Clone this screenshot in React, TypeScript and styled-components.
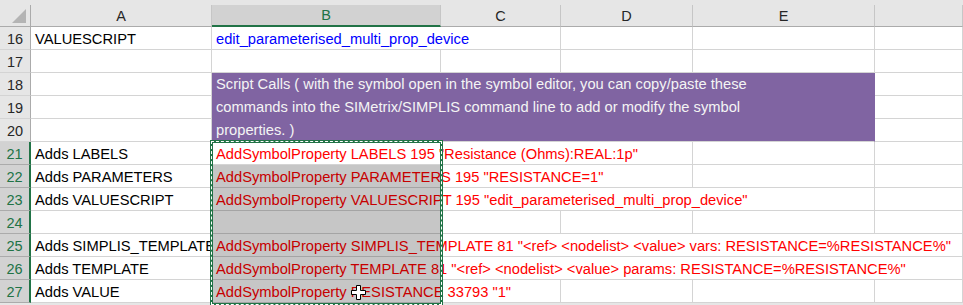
import React from 'react';
import styled, { createGlobalStyle } from 'styled-components';

const GlobalStyle = createGlobalStyle`
  html, body {
    margin: 0;
    padding: 0;
    background: #ffffff;
    overflow: hidden;
  }
  body {
    font-family: 'Liberation Sans', Arial, sans-serif;
  }
`;

const GREEN = '#217346';
const GRID = '#d4d4d4';

const Window = styled.div`
  width: 963px;
  height: 305px;
  background: #e6e6e6;
  padding-top: 5px;
  box-sizing: border-box;
  overflow: hidden;
`;

const Sheet = styled.div`
  position: relative;
  display: grid;
  grid-template-columns: 31px 181px 229px 120px 132px 182px 1fr;
  grid-template-rows: 22px repeat(12, 23px);
  font-size: 14.7px;
  color: #000;
`;

const Corner = styled.div`
  position: relative;
  background: #e6e6e6;
  border-right: 1px solid #ababab;
  border-bottom: 1px solid #ababab;

  &::after {
    content: '';
    position: absolute;
    right: 4px;
    bottom: 3px;
    width: 0;
    height: 0;
    border-left: 14px solid transparent;
    border-bottom: 14px solid #b4b4b4;
  }
`;

const ColHead = styled.div<{ $active?: boolean }>`
  display: flex;
  align-items: center;
  justify-content: center;
  background: ${p => (p.$active ? '#d2d2d2' : '#e6e6e6')};
  color: ${p => (p.$active ? GREEN : '#262626')};
  border-right: 1px solid #c6c6c6;
  border-bottom: ${p => (p.$active ? `2px solid ${GREEN}` : '1px solid #ababab')};
  box-sizing: border-box;
  font-size: 14.5px;
`;

const RowHead = styled.div<{ $active?: boolean }>`
  display: flex;
  align-items: center;
  justify-content: center;
  padding-top: 1px;
  background: ${p => (p.$active ? '#d2d2d2' : '#e6e6e6')};
  color: ${p => (p.$active ? GREEN : '#262626')};
  border-right: ${p => (p.$active ? `2px solid ${GREEN}` : '1px solid #ababab')};
  border-bottom: 1px solid ${p => (p.$active ? '#ababab' : '#d4d4d4')};
  box-sizing: border-box;
  font-size: 14.5px;
`;

const Cell = styled.div<{ $span?: number; $color?: string }>`
  grid-column: span ${p => p.$span || 1};
  display: flex;
  align-items: center;
  padding: 1px 0 0 4px;
  background: #ffffff;
  color: ${p => p.$color || '#000'};
  border-right: 1px solid ${GRID};
  border-bottom: 1px solid ${GRID};
  box-sizing: border-box;
  white-space: nowrap;
  overflow: hidden;
`;

const Banner = styled.div`
  grid-column: span 4;
  grid-row: span 3;
  background: #8064a2;
  color: #f4f4f4;
  border-right: 1px solid #8064a2;
  border-bottom: 1px solid ${GRID};
  box-sizing: border-box;
  padding: 0 4px;
  line-height: 23px;
  white-space: nowrap;
  overflow: hidden;
`;

const BannerLine = styled.div`
  height: 23px;
`;

const Selection = styled.div`
  position: absolute;
  left: 212px;
  top: 160px;
  width: 229px;
  height: 138px;
  background: rgba(0, 0, 0, 0.225);
  pointer-events: none;
`;

const MarchingAnts = styled.div`
  position: absolute;
  left: 210px;
  top: 135px;
  width: 233px;
  height: 166px;
  border: 3px solid ${GREEN};
  box-sizing: border-box;
  pointer-events: none;

  &::after {
    content: '';
    position: absolute;
    inset: -2px;
    border: 1px dashed #ffffff;
  }
`;

const Pointer = styled.svg`
  position: absolute;
  left: 351px;
  top: 280px;
`;

const RED = '#ff0000';

type Row = {
  n: number;
  a?: string;
  b?: string;
  bColor?: string;
  bSpan?: number;
};

const rows: Row[] = [
  { n: 16, a: 'VALUESCRIPT', b: 'edit_parameterised_multi_prop_device', bColor: '#0000ff', bSpan: 2 },
  { n: 17 },
  { n: 18 },
  { n: 19 },
  { n: 20 },
  { n: 21, a: 'Adds LABELS', b: 'AddSymbolProperty LABELS 195 "Resistance (Ohms):REAL:1p"', bSpan: 3 },
  { n: 22, a: 'Adds PARAMETERS', b: 'AddSymbolProperty PARAMETERS 195 "RESISTANCE=1"', bSpan: 3 },
  { n: 23, a: 'Adds VALUESCRIPT', b: 'AddSymbolProperty VALUESCRIPT 195 "edit_parameterised_multi_prop_device"', bSpan: 4 },
  { n: 24 },
  { n: 25, a: 'Adds SIMPLIS_TEMPLATE', b: 'AddSymbolProperty SIMPLIS_TEMPLATE 81 "<ref> <nodelist> <value> vars: RESISTANCE=%RESISTANCE%"', bSpan: 5 },
  { n: 26, a: 'Adds TEMPLATE', b: 'AddSymbolProperty TEMPLATE 81 "<ref> <nodelist> <value> params: RESISTANCE=%RESISTANCE%"', bSpan: 5 },
  { n: 27, a: 'Adds VALUE', b: 'AddSymbolProperty RESISTANCE 33793 "1"', bSpan: 2 },
];

const bannerLines = [
  'Script Calls ( with the symbol open in the symbol editor, you can copy/paste these',
  'commands into the SIMetrix/SIMPLIS command line to add or modify the symbol',
  'properties. )',
];

const columns = ['A', 'B', 'C', 'D', 'E', ''];

function renderRow(r: Row) {
  const active = r.n >= 21;
  const cells: React.ReactNode[] = [
    <RowHead key="h" $active={active}>{r.n}</RowHead>,
    <Cell key="a">{r.a}</Cell>,
  ];

  if (r.n === 18) {
    cells.push(
      <Banner key="banner">
        {bannerLines.map(line => (
          <BannerLine key={line}>{line}</BannerLine>
        ))}
      </Banner>
    );
    cells.push(<Cell key="f" />);
    return cells;
  }
  if (r.n === 19 || r.n === 20) {
    cells.push(<Cell key="f" />);
    return cells;
  }

  const span = r.b ? r.bSpan || 1 : 1;
  cells.push(
    <Cell key="b" $span={span} $color={r.bColor || RED}>
      {r.b}
    </Cell>
  );
  for (let i = 1 + span; i <= 5; i++) {
    cells.push(<Cell key={`c${i}`} />);
  }
  return cells;
}

export default function App() {
  return (
    <>
      <GlobalStyle />
      <Window>
        <Sheet>
          <Corner />
          {columns.map(c => (
            <ColHead key={c || 'blank'} $active={c === 'B'}>
              {c}
            </ColHead>
          ))}
          {rows.map(r => renderRow(r))}
          <Selection />
          <MarchingAnts />
          <Pointer width="15" height="15" viewBox="0 0 15 15">
            <path
              d="M5.5 0.5h4v5h5v4h-5v5h-4v-5h-5v-4h5z"
              fill="#ffffff"
              stroke="#000000"
              strokeWidth="1"
            />
          </Pointer>
        </Sheet>
      </Window>
    </>
  );
}
